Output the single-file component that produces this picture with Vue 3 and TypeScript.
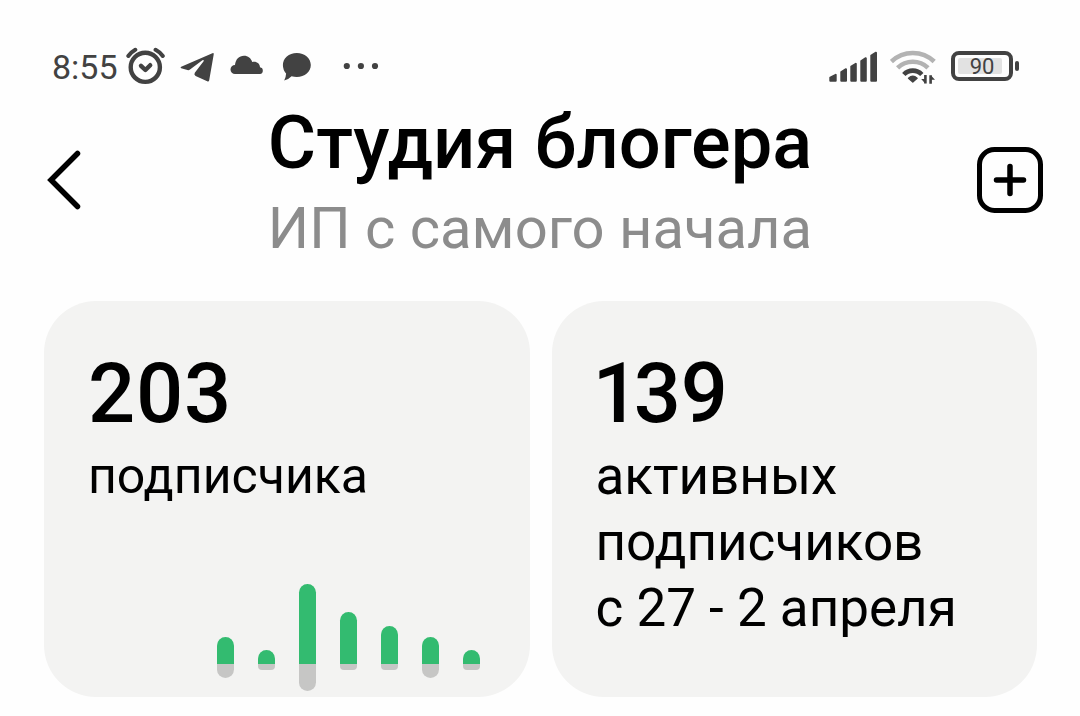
<script setup lang="ts">
interface Day {
  up: number
  down: number
}

const days: Day[] = [
  { up: 27, down: 14 },
  { up: 14, down: 6 },
  { up: 80, down: 27 },
  { up: 52, down: 6 },
  { up: 38, down: 6 },
  { up: 27, down: 14 },
  { up: 14, down: 6 },
]
</script>

<template>
  <div class="page">
    <div class="status">
      <div class="status-left">
        <span class="time">8:55</span>
        <svg width="42" height="44" viewBox="126 45 42 44" fill="none" stroke="#424242" stroke-width="4.400" stroke-linecap="round" stroke-linejoin="round" aria-hidden="true">
          <circle cx="145.3" cy="67.3" r="14.6" />
          <path d="M141 65.800l4.400 4.200 4.800-4.800" />
          <path d="M128.300 56q3-4 7-6.200M155.600 49.800q4.200 2.200 7.200 6.200" stroke-width="4" />
        </svg>
        <svg width="42" height="44" viewBox="176 45 42 44" fill="#424242" aria-hidden="true">
          <path d="M181.200 66.800L212.400 53.200Q214 52.600 213.700 54.400L209.200 80.200Q208.800 81.900 207.200 81.200L195.600 75.900Q193.600 74.800 194.800 72.800L203.600 61.200Q204.200 59.600 202.400 60.300L190 69.600Q188.800 70.500 187.400 70.100L181.200 68.300Q179.800 67.600 181.200 66.800Z" />
        </svg>
        <svg width="42" height="44" viewBox="226 45 42 44" fill="#424242" aria-hidden="true">
          <path d="M235 74a4.500 4.500 0 0 1 0-9C235.600 59.500 239 55.800 244 55.800C248 55.800 251 58.200 252.200 62C256.500 61 259.800 63.400 260 67.300A3.400 3.400 0 0 1 260 74Z" />
        </svg>
        <svg width="42" height="44" viewBox="276 45 42 44" fill="#424242" aria-hidden="true">
          <path d="M296.800 53c8 0 14 5.300 14 12.100s-6 12-14 12q-2.800 0-5.200-.8-3 3.200-7.400 4.200 1.800-3.400 1.900-6.900-3.200-3.500-3.200-8.500c0-6.800 5.900-12.100 13.900-12.100Z" />
        </svg>
        <svg width="60" height="44" viewBox="326 45 60 44" fill="#424242" aria-hidden="true">
          <circle cx="346.800" cy="66" r="3.100" />
          <circle cx="360.900" cy="66" r="3.100" />
          <circle cx="375" cy="66" r="3.100" />
        </svg>
      </div>
      <div class="status-right">
        <svg width="50" height="44" viewBox="828 45 50 44" fill="#424242" stroke="#424242" stroke-width="2" stroke-linejoin="round" aria-hidden="true">
          <path d="M830.300 77.600l5.400-2.800v6h-5.400ZM841.300 72l4.700-2.800v11.600h-4.700ZM851.300 66.600l4.500-2.800v17h-4.500ZM861.300 61l4.500-2.800v22.600h-4.500ZM871.300 55.500l4.700-2.800v28.100h-4.700Z" />
        </svg>
        <svg width="49" height="44" viewBox="890 45 49 44" fill="none" stroke-width="4.600" aria-hidden="true">
          <path d="M891.400 61.500a31 31 0 0 1 42.800 0" stroke="#b3b3b3" />
          <path d="M897.600 67.800a22 22 0 0 1 30.400 0" stroke="#b3b3b3" />
          <path d="M903.800 74.500a12.500 12.500 0 0 1 18 0" stroke="#424242" />
          <path d="M908.500 78.200q4.300-4 8.600 0l-4.300 3.800Z" fill="#424242" stroke="#424242" stroke-width="1.400" stroke-linejoin="round" />
          <path d="M925.400 75v8.500M930.600 83.800v-8.500" stroke="#424242" stroke-width="2.600" />
          <path d="M921.200 79h4v4.600ZM930.800 75.200v4.600h4.200Z" fill="#424242" />
        </svg>
        <div class="battery">
          <div class="battery-body"><span class="battery-level">90</span></div>
          <div class="battery-cap"></div>
        </div>
      </div>
    </div>

    <header class="header">
      <button class="icon-button" type="button" aria-label="Назад">
        <svg width="66" height="66" viewBox="37 147 66 66" fill="none" stroke="#000" stroke-width="5.500" stroke-linecap="round" stroke-linejoin="miter" aria-hidden="true">
          <path d="M77.500 153.500L51 180l26.500 26.500" />
        </svg>
      </button>
      <div class="titles">
        <h1>Студия блогера</h1>
        <p>ИП с самого начала</p>
      </div>
      <button class="icon-button" type="button" aria-label="Добавить">
        <svg width="66" height="66" viewBox="0 0 66 66" fill="none" stroke="#000" stroke-width="5" stroke-linecap="round" aria-hidden="true">
          <rect x="2.500" y="2.500" width="61" height="61" rx="15" />
          <path d="M19.500 33h27M33 19.500v27" stroke-width="5.500" />
        </svg>
      </button>
    </header>

    <main class="cards">
      <section class="card card-total">
        <strong class="number">203</strong>
        <p class="label label-small">подписчика</p>
        <div class="chart" aria-hidden="true">
          <div v-for="(day, i) in days" :key="i" class="day">
            <div class="up" :style="{ height: day.up + 'px' }"></div>
            <div class="down" :class="{ short: day.down < 8 }" :style="{ height: day.down + 'px' }"></div>
          </div>
        </div>
      </section>
      <section class="card">
        <strong class="number">139</strong>
        <p class="label">активных<br />подписчиков<br />с 27 - 2 апреля</p>
      </section>
    </main>
  </div>
</template>

<style>
body {
  margin: 0;
  background: #fefefe;
}
</style>

<style scoped>
.page {
  font-family: Roboto, "Liberation Sans", sans-serif;
  color: #000;
}
h1,
p {
  margin: 0;
}
svg {
  display: block;
}
.status {
  display: flex;
  justify-content: space-between;
  padding: 45px 61px 15px 52px;
  color: #424242;
}
.status-left,
.status-right {
  display: flex;
  align-items: center;
}
.status-left {
  gap: 8px;
}
.status-right {
  gap: 12px;
}
.time {
  font-size: 34px;
  line-height: 44px;
}
.battery {
  display: flex;
  align-items: center;
  gap: 2px;
  margin-bottom: 2px;
}
.battery-body {
  box-sizing: border-box;
  width: 62px;
  height: 30px;
  padding: 3px;
  border: 4px solid #424242;
  border-radius: 8px;
}
.battery-level {
  display: block;
  width: 44px;
  padding-left: 4px;
  box-sizing: border-box;
  border-radius: 2px;
  background: #e2e2e2;
  font-size: 22px;
  line-height: 18px;
  height: 16px;
  text-align: center;
}
.battery-cap {
  width: 4px;
  height: 10px;
  border-radius: 2px;
  background: #424242;
}
.header {
  display: flex;
  align-items: center;
  justify-content: space-between;
  padding: 0 37px 41px;
}
.icon-button {
  margin-bottom: 4px;
  padding: 0;
  border: 0;
  background: none;
}
.titles {
  display: flex;
  flex-direction: column;
  gap: 14px;
  text-align: center;
}
h1 {
  font-size: 74px;
  line-height: 78px;
  font-weight: 500;
}
.titles p {
  font-size: 58px;
  line-height: 64px;
  color: #8c8c8c;
}
.cards {
  display: grid;
  grid-template-columns: 1fr 1fr;
  gap: 22px;
  padding: 0 43px 19px 44px;
}
.card {
  display: flex;
  flex-direction: column;
  padding: 51px 44px 56px;
  border-radius: 52px;
  background: #f3f3f2;
}
.card-total {
  padding-bottom: 6px;
}
.number {
  font-size: 83px;
  line-height: 84px;
  font-weight: 500;
  font-variant-numeric: proportional-nums;
}
.label {
  margin-top: 7px;
  font-size: 53px;
  line-height: 66px;
}
.label-small {
  font-size: 50px;
}
.chart {
  display: flex;
  justify-content: space-between;
  align-self: flex-end;
  width: 264px;
  margin: auto 5px 0 0;
}
.day {
  display: grid;
  grid-template-rows: 80px 27px;
  width: 17px;
}
.up {
  align-self: end;
  border-radius: 9px 9px 0 0;
  background: #33bb70;
}
.down {
  border-radius: 0 0 9px 9px;
  background: #c6c6c5;
}
.down.short {
  border-radius: 0 0 4px 4px;
}
</style>
